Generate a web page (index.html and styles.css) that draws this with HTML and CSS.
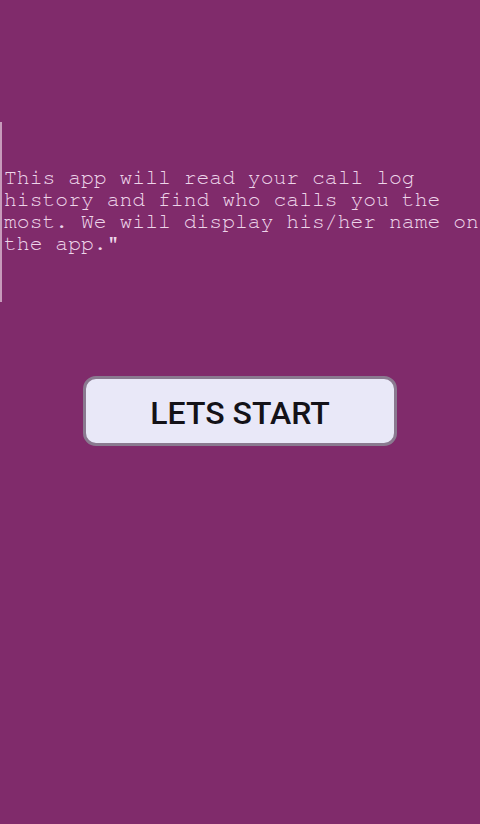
FILE: index.html
```html
<!DOCTYPE html>
<html>
<head>
<meta charset="utf-8">
<link rel="stylesheet" href="styles.css">
</head>
<body>
<div class="screen">
  <div class="intro">
    <p class="intro-text">This app will read your call log history and find who calls you the most. We will display his/her name on the app."</p>
  </div>
  <div class="action">
    <button class="start-btn">LETS START</button>
  </div>
</div>
</body>
</html>
```

FILE: styles.css
```css
html, body {
  margin: 0;
  padding: 0;
  background: #802b6b;
}
.screen {
  width: 480px;
  height: 824px;
  overflow: hidden;
  display: flex;
  flex-direction: column;
  padding-top: 122px;
  box-sizing: border-box;
}
.intro {
  height: 180px;
  border-left: 2px solid #c79bbb;
  padding-left: 2px;
  padding-bottom: 2px;
  display: flex;
  align-items: center;
  box-sizing: border-box;
}
.intro-text {
  margin: 0;
  font-family: "Nimbus Mono PS", "Nimbus Mono L", FreeMono, "Courier New", Courier, "Liberation Mono", monospace;
  font-size: 21.4px;
  line-height: 22px;
  color: #eed6ea;
  width: 480px;
}
.action {
  display: flex;
  justify-content: center;
  margin-top: 74px;
}
.start-btn {
  width: 314px;
  height: 70px;
  border: 3px solid #8a7a90;
  border-radius: 13px;
  background: #e9e8f8;
  font-family: Roboto, "Liberation Sans", sans-serif;
  font-weight: 500;
  font-size: 32px;
  color: #141218;
  padding: 3px 0 0;
  box-sizing: border-box;
}
```
